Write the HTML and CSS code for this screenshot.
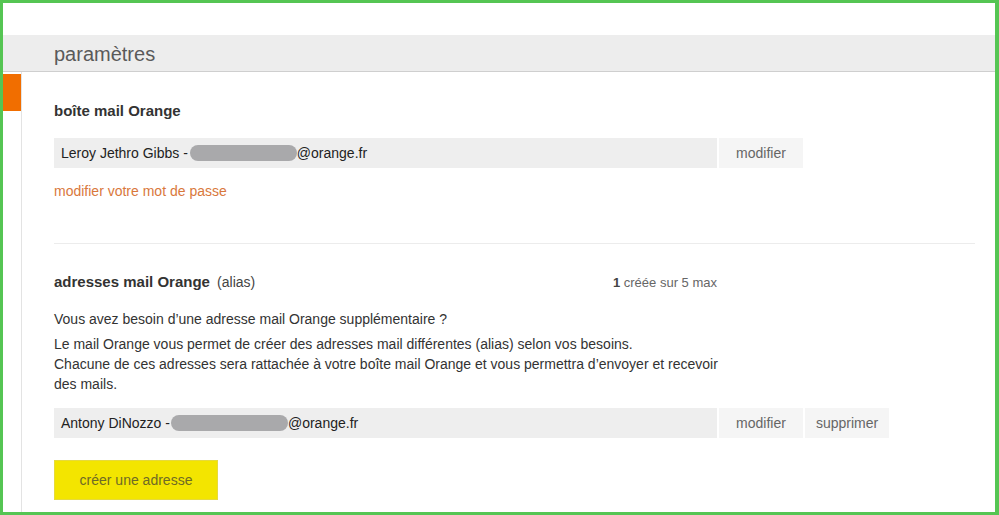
FILE: index.html
```html
<!DOCTYPE html>
<html lang="fr">
<head>
  <meta charset="UTF-8" />
  <meta name="viewport" content="width=device-width, initial-scale=1.0"/>
  <title>paramètres</title>
  <link rel="stylesheet" href="styles.css">
</head>
<body>
  <div class="frame">
    <div class="top-space"></div>
    <div class="page-head">
      <h1>paramètres</h1>
    </div>

    <div class="main">
      <div class="side">
        <div class="side-mark"></div>
      </div>

      <div class="content">
        <h2 class="section-title">boîte mail Orange</h2>
        <div class="account-row">
          <div class="account-label">Leroy Jethro Gibbs - <span class="masked masked-main"></span>@orange.fr</div>
          <button class="row-btn">modifier</button>
        </div>
        <a class="pwd-link" href="#">modifier votre mot de passe</a>

        <hr class="sep">

        <div class="alias-head">
          <h2 class="section-title">adresses mail Orange <span class="alias-tag">(alias)</span></h2>
          <span class="alias-count"><b>1</b> créée sur 5 max</span>
        </div>
        <p class="intro">Vous avez besoin d’une adresse mail Orange supplémentaire ?</p>
        <p class="desc">Le mail Orange vous permet de créer des adresses mail différentes (alias) selon vos besoins.<br>Chacune de ces adresses sera rattachée à votre boîte mail Orange et vous permettra d’envoyer et recevoir des mails.</p>

        <div class="account-row alias-row">
          <div class="account-label">Antony DiNozzo -<span class="masked masked-alias"></span>@orange.fr</div>
          <button class="row-btn">modifier</button>
          <button class="row-btn">supprimer</button>
        </div>

        <button class="create-btn">créer une adresse</button>
      </div>
    </div>
  </div>
</body>
</html>
```

FILE: styles.css
```css
html, body {
  margin: 0;
  padding: 0;
}

body {
  font-family: "Liberation Sans", Arial, sans-serif;
  font-size: 14px;
  color: #333;
  background: #fff;
}

.frame {
  box-sizing: border-box;
  height: 515px;
  border: 3px solid #55c553;
  border-right-width: 4px;
  overflow: hidden;
  display: flex;
  flex-direction: column;
}

.top-space {
  height: 32px;
}

.page-head {
  background: #ededed;
  border-bottom: 1px solid #cfcfcf;
  height: 37px;
  box-sizing: border-box;
  display: flex;
  align-items: center;
  padding-left: 51px;
  padding-top: 2px;
}

.page-head h1 {
  margin: 0;
  font-size: 20px;
  font-weight: normal;
  color: #5a5a5a;
}

.main {
  flex: 1;
  display: flex;
}

.side {
  width: 18px;
  border-right: 1px solid #e3e3e3;
  padding-top: 2px;
}

.side-mark {
  height: 37px;
  background: #f16e00;
}

.content {
  flex: 1;
  padding: 29px 20px 0 32px;
  display: flex;
  flex-direction: column;
  align-items: flex-start;
}

.section-title {
  margin: 0;
  font-size: 15px;
  font-weight: bold;
  line-height: 20px;
  color: #333;
}

.account-row {
  display: flex;
  gap: 2px;
  margin-top: 17px;
  height: 30px;
}

.account-label {
  width: 663px;
  box-sizing: border-box;
  background: #eeeeee;
  padding-left: 7px;
  display: flex;
  align-items: center;
  color: #222;
}

.masked {
  display: inline-block;
  height: 16px;
  border-radius: 8px;
  background: #a9a9ab;
}

.masked-main {
  width: 107px;
  margin-left: 2px;
}

.masked-alias {
  width: 117px;
  margin-left: 1px;
}

.row-btn {
  width: 84px;
  border: none;
  background: #f5f5f5;
  color: #666;
  font-family: inherit;
  font-size: 14px;
  padding: 0;
  cursor: pointer;
}

.pwd-link {
  margin-top: 13px;
  line-height: 20px;
  color: #d9783c;
  text-decoration: none;
}

.sep {
  align-self: stretch;
  border: none;
  border-top: 1px solid #ececec;
  margin: 42px 0 0;
}

.alias-head {
  width: 663px;
  margin-top: 28px;
  display: flex;
  justify-content: space-between;
  align-items: center;
}

.alias-tag {
  font-weight: normal;
  font-size: 14px;
  color: #444;
  margin-left: 3px;
}

.alias-count {
  font-size: 13px;
  color: #666;
}

.alias-count b {
  color: #444;
}

.intro {
  margin: 17px 0 0;
  line-height: 20px;
}

.desc {
  margin: 5px 0 0;
  line-height: 20px;
  max-width: 665px;
}

.alias-row {
  margin-top: 14px;
}

.create-btn {
  margin-top: 22px;
  width: 164px;
  height: 40px;
  background: #f3e500;
  border: 1px solid #e6da3c;
  color: #6e6a26;
  font-family: inherit;
  font-size: 14px;
  cursor: pointer;
}
```
